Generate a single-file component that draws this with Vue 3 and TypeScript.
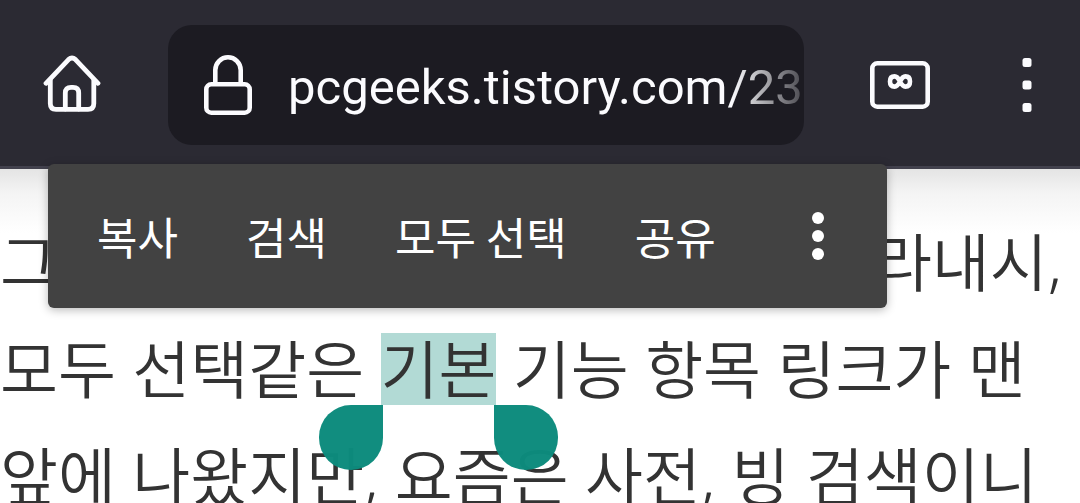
<script setup lang="ts">
import { ref } from 'vue'

const address = ref('pcgeeks.tistory.com/23')
const actions: string[] = ['복사', '검색', '모두 선택', '공유']
</script>

<template>
  <div class="browser">
    <header class="toolbar">
      <button class="icon-button home" type="button" aria-label="홈">
        <svg width="60" height="60" viewBox="0 0 60 60" fill="none" stroke="#fbfbfe" stroke-width="4.8" stroke-linecap="round" stroke-linejoin="round">
          <path d="M4 28.300 L26.500 4.600 Q30 1.300 33.500 4.600 L56 28.300" />
          <path d="M8.300 25 V48.500 Q8.300 54.300 14 54.300 H46 Q51.800 54.300 51.800 48.500 V25" />
          <path d="M23.300 54 V38 Q23.300 32.300 29 32.300 H31 Q36.700 32.300 36.700 38 V54" />
        </svg>
      </button>
      <div class="address">
        <svg class="lock" width="48" height="60" viewBox="0 0 48 60" fill="none" stroke="#fbfbfe" stroke-width="4.600">
          <rect x="2.300" y="29.300" width="43.400" height="28.400" rx="5" />
          <path d="M11.300 29 V15 A12.700 12.700 0 0 1 36.700 15 V29" />
        </svg>
        <input v-model="address" class="url" type="text" aria-label="주소" />
      </div>
      <button class="icon-button tabs" type="button" aria-label="탭">
        <svg width="60" height="48" viewBox="0 0 60 48" fill="none" stroke="#fbfbfe">
          <rect x="2.300" y="2.300" width="55.400" height="43.400" rx="5" stroke-width="4.600" />
          <path d="M30 20.500 C28 24.500 26.500 25.600 24.600 25.600 C21.500 25.600 20 23.600 20 20.500 C20 17.400 21.500 15.400 24.600 15.400 C26.500 15.400 28 16.500 30 20.500 C32 24.500 33.500 25.600 35.400 25.600 C38.500 25.600 40 23.600 40 20.500 C40 17.400 38.500 15.400 35.400 15.400 C33.500 15.400 32 16.500 30 20.500 Z" stroke-width="4.600" />
        </svg>
      </button>
      <button class="icon-button" type="button" aria-label="메뉴">
        <svg width="10" height="54" viewBox="0 0 10 54" fill="#fbfbfe">
          <rect x="0.500" y="0" width="9" height="9" rx="2.500" />
          <rect x="0.500" y="22.500" width="9" height="9" rx="2.500" />
          <rect x="0.500" y="45" width="9" height="9" rx="2.500" />
        </svg>
      </button>
    </header>

    <main class="page">
      <div class="selection-menu" role="toolbar" aria-label="텍스트 선택">
        <button v-for="action in actions" :key="action" class="action" type="button">{{ action }}</button>
        <button class="action more" type="button" aria-label="더보기">
          <svg width="12" height="48" viewBox="0 0 12 48" fill="#ffffff">
            <circle cx="6" cy="6" r="6" />
            <circle cx="6" cy="24" r="6" />
            <circle cx="6" cy="42" r="6" />
          </svg>
        </button>
      </div>
      <p class="article">
        <span class="line split"><span>그</span><span>라내시,</span></span>
        <span class="line">모두 선택같은 <mark class="selected">기본<i class="handle start"></i><i class="handle end"></i></mark> 기능 항목 링크가 맨</span>
        <span class="line">앞에 나왔지만, 요즘은 사전, 빙 검색이니</span>
      </p>
    </main>
  </div>
</template>

<style>
body {
  margin: 0;
  overflow: hidden;
  background: #ffffff;
}
</style>

<style scoped>
.browser {
  height: 100vh;
  overflow: hidden;
  display: flex;
  flex-direction: column;
  background: #ffffff;
}

.toolbar {
  flex: none;
  display: flex;
  align-items: center;
  padding: 25px 48px 21px 42px;
  background: #2b2a33;
  border-bottom: 3px solid #42414d;
}

.icon-button {
  flex: none;
  display: flex;
  padding: 0;
  border: 0;
  background: none;
}

.home {
  margin-right: 66px;
}

.tabs {
  margin: 0 92px 0 66px;
}

.address {
  flex: 1;
  min-width: 0;
  height: 120px;
  display: flex;
  align-items: center;
  gap: 36px;
  padding-left: 36px;
  border-radius: 24px;
  background: #1c1b22;
  overflow: hidden;
}

.lock {
  flex: none;
}

.url {
  flex: 1;
  min-width: 0;
  height: 80px;
  padding: 4px 0 0;
  border: 0;
  outline: 0;
  box-sizing: border-box;
  background: none;
  color: #fbfbfe;
  font: 400 49px Roboto, "Noto Sans CJK KR", sans-serif;
  mask-image: linear-gradient(to left, rgba(0, 0, 0, 0.2), #000000 72px);
}

.page {
  flex: 1;
  position: relative;
  background: linear-gradient(#e4e4e4, #f4f4f4 24px, #ffffff 64px);
}

.article {
  margin: 0;
  padding-top: 39px;
  color: #333333;
  font: 350 63px/107px "Noto Sans", "Noto Sans CJK KR", sans-serif;
  white-space: nowrap;
}

.line {
  display: block;
}

.split {
  display: flex;
  justify-content: space-between;
  padding-right: 18px;
}

.selected {
  position: relative;
  display: inline-block;
  line-height: 72px;
  color: inherit;
  background: #b2dad5;
}

.handle {
  position: absolute;
  top: 100%;
  z-index: 1;
  width: 64px;
  height: 65px;
  background: #0c8b7c;
  opacity: 0.98;
}

.start {
  right: 100%;
  margin-right: -2px;
  border-radius: 32px 0 32px 32px;
}

.end {
  left: 100%;
  margin-left: -2px;
  border-radius: 0 32px 32px 32px;
}

.selection-menu {
  position: absolute;
  z-index: 2;
  top: -5px;
  left: 48px;
  height: 144px;
  display: flex;
  border-radius: 6px;
  background: #424242;
  box-shadow: 0 2px 10px rgba(0, 0, 0, 0.28);
}

.action {
  display: flex;
  align-items: center;
  padding: 0 34px;
  border: 0;
  background: none;
  color: #ffffff;
  font: 400 44px "Noto Sans CJK KR", sans-serif;
}

.action:first-child {
  padding-left: 49px;
}

.more {
  padding: 0 63px 0 62px;
}
</style>
